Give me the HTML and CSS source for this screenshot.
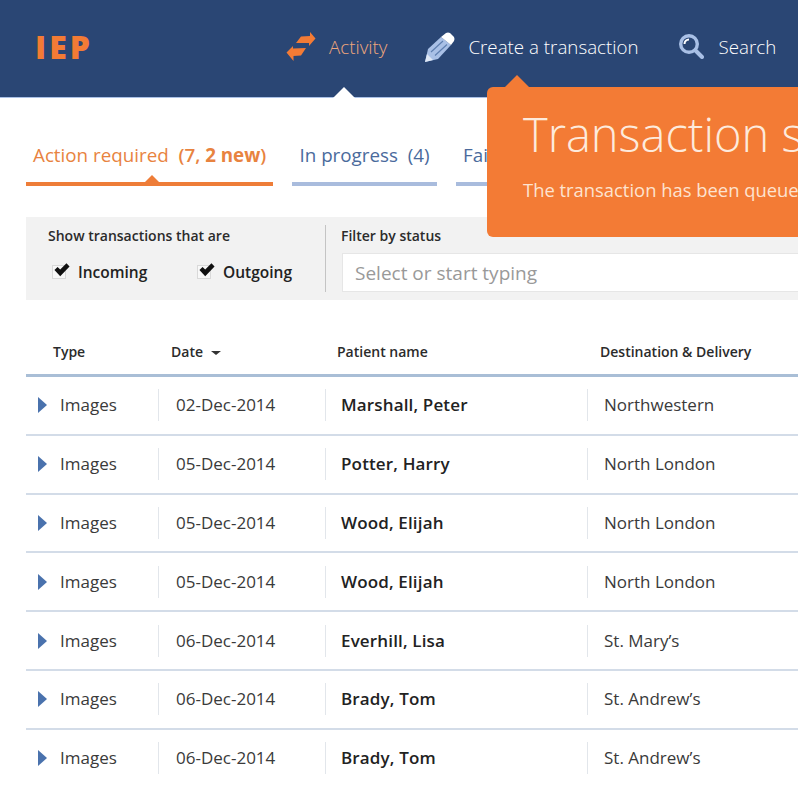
FILE: index.html
```html
<!DOCTYPE html>
<html lang="en">
<head>
    <meta charset="UTF-8">
    <meta name="viewport" content="width=device-width, initial-scale=1.0">
    <title>IEP Activity</title>
    <link rel="stylesheet" href="styles.css">
</head>
<body>
    <!-- Header -->
    <header class="topbar">
        <div class="logo">IEP</div>
        <nav class="main-nav">
            <a class="nav-item nav-activity">
                <svg class="nav-icon icon-activity" viewBox="0 0 30 30"><path d="M15 4.500 L24 4 L24 0 L29.500 6.500 L23 14 L23 11 L10 11 Z" fill="#f37b35"/><path d="M0.500 20.500 L7 14 L7 16.500 L20 16 L15 23.500 L7.500 24 L7.500 29 Z" fill="#f37b35"/></svg>
                <span>Activity</span>
            </a>
            <a class="nav-item nav-create">
                <svg class="nav-icon icon-create" viewBox="0 0 30 30"><path d="M0 30 L3 17 L16 5 L26 13 L13 27 Z" fill="#a9c0e6"/><path d="M16 5 L21 1 Q23 0 25 1 L29 5 Q30 7 29 9 L26 13 Z" fill="#fff"/><path d="M0 30 L2 22 L8 28 Z" fill="#dfe8f6"/><path d="M6 20 L18 9 M10 23.500 L22 12.500" stroke="#5f7fb0" stroke-width="1.200"/></svg>
                <span>Create a transaction</span>
            </a>
            <a class="nav-item nav-search">
                <svg class="nav-icon icon-search" viewBox="0 0 25 25"><circle cx="10" cy="10" r="8.300" fill="#2a4674" stroke="#a9c0e6" stroke-width="3.400"/><path d="M5.500 10 A4.500 4.500 0 0 1 10 5.500" fill="none" stroke="#fff" stroke-width="2"/><path d="M16.500 16.500 L23 23" stroke="#a9c0e6" stroke-width="4" stroke-linecap="round"/></svg>
                <span>Search</span>
            </a>
        </nav>
        <span class="activity-notch"></span>
    </header>

    <!-- Tabs -->
    <div class="tabs">
        <div class="tab tab-action">Action required&nbsp; <span class="tab-count">(7, <b>2 new</b>)</span></div>
        <div class="tab tab-progress">In progress&nbsp; (4)</div>
        <div class="tab tab-failed">Failed&nbsp; (1)</div>
    </div>

    <!-- Filters -->
    <div class="filter-bar">
        <div class="filter-direction">
            <div class="filter-label">Show transactions that are</div>
            <div class="checks">
                <label class="check check-in"><span class="box"><svg viewBox="0 0 18 15"><path d="M0.500 7.500 L4 4 L7 7 L14 0 L17.500 3.500 L7 14.500 Z" fill="#111"/></svg></span>Incoming</label>
                <label class="check"><span class="box"><svg viewBox="0 0 18 15"><path d="M0.500 7.500 L4 4 L7 7 L14 0 L17.500 3.500 L7 14.500 Z" fill="#111"/></svg></span>Outgoing</label>
            </div>
        </div>
        <div class="filter-status">
            <div class="filter-label">Filter by status</div>
            <div class="status-input">Select or start typing</div>
        </div>
    </div>

    <!-- Transactions -->
    <div class="table">
        <div class="table-head">
            <div class="th th-type">Type</div>
            <div class="th th-date">Date <span class="sort-caret"></span></div>
            <div class="th th-name">Patient name</div>
            <div class="th th-dest">Destination &amp; Delivery</div>
        </div>
        <div class="row">
            <div class="cell cell-type"><span class="expander"></span>Images</div>
            <div class="cell cell-date">02-Dec-2014</div>
            <div class="cell cell-name">Marshall, Peter</div>
            <div class="cell cell-dest">Northwestern</div>
        </div>
        <div class="row">
            <div class="cell cell-type"><span class="expander"></span>Images</div>
            <div class="cell cell-date">05-Dec-2014</div>
            <div class="cell cell-name">Potter, Harry</div>
            <div class="cell cell-dest">North London</div>
        </div>
        <div class="row">
            <div class="cell cell-type"><span class="expander"></span>Images</div>
            <div class="cell cell-date">05-Dec-2014</div>
            <div class="cell cell-name">Wood, Elijah</div>
            <div class="cell cell-dest">North London</div>
        </div>
        <div class="row">
            <div class="cell cell-type"><span class="expander"></span>Images</div>
            <div class="cell cell-date">05-Dec-2014</div>
            <div class="cell cell-name">Wood, Elijah</div>
            <div class="cell cell-dest">North London</div>
        </div>
        <div class="row">
            <div class="cell cell-type"><span class="expander"></span>Images</div>
            <div class="cell cell-date">06-Dec-2014</div>
            <div class="cell cell-name">Everhill, Lisa</div>
            <div class="cell cell-dest">St. Mary’s</div>
        </div>
        <div class="row">
            <div class="cell cell-type"><span class="expander"></span>Images</div>
            <div class="cell cell-date">06-Dec-2014</div>
            <div class="cell cell-name">Brady, Tom</div>
            <div class="cell cell-dest">St. Andrew’s</div>
        </div>
        <div class="row">
            <div class="cell cell-type"><span class="expander"></span>Images</div>
            <div class="cell cell-date">06-Dec-2014</div>
            <div class="cell cell-name">Brady, Tom</div>
            <div class="cell cell-dest">St. Andrew’s</div>
        </div>
    </div>

    <!-- Toast -->
    <div class="toast">
        <h1>Transaction submitted</h1>
        <p>The transaction has been queued for delivery.</p>
    </div>
</body>
</html>
```

FILE: styles.css
```css
html, body {
    height: 100%;
    overflow: hidden;
}
body {
    margin: 0;
    position: relative;
    width: 798px;
    background-color: #fff;
    font-family: "Open Sans", Arial, sans-serif;
    color: #222;
}

/* Header */
.topbar {
    height: 98px;
    box-sizing: border-box;
    padding-left: 35px;
    background-color: #2a4674;
    border-bottom: 1px solid #a9c0e6;
    display: flex;
    align-items: center;
    position: relative;
}
.logo {
    color: #f37b35;
    font-size: 32px;
    font-weight: 800;
    letter-spacing: 3px;
    width: 251px;
    flex-shrink: 0;
    position: relative;
    top: -2px;
}
.main-nav {
    display: flex;
    align-items: center;
    white-space: nowrap;
    font-size: 18.750px;
    font-weight: 300;
    position: relative;
    top: -2px;
}
.nav-item {
    display: flex;
    align-items: center;
    color: #fff;
}
.nav-activity {
    color: #f0a77c;
    gap: 13px;
    margin-right: 38px;
}
.nav-create {
    gap: 13px;
    margin-right: 40px;
}
.nav-search {
    gap: 15px;
}
.nav-icon {
    flex-shrink: 0;
}
.icon-activity,
.icon-create {
    width: 30px;
    height: 30px;
}
.icon-search {
    width: 25px;
    height: 25px;
}
.activity-notch {
    position: absolute;
    left: 333px;
    bottom: -1px;
    border-left: 11px solid transparent;
    border-right: 11px solid transparent;
    border-bottom: 11px solid #fff;
}

/* Tabs */
.tabs {
    display: flex;
    gap: 19px;
    margin: 41px 0 0 26px;
}
.tab {
    height: 47px;
    box-sizing: border-box;
    padding: 1px 7px 0;
    border-bottom: 4px solid #a9bcdd;
    color: #4a6a9c;
    font-size: 18.800px;
    line-height: 30px;
    white-space: nowrap;
    text-align: center;
}
.tab-action {
    width: 247px;
    color: #e8833f;
    border-bottom-color: #ee7d38;
    position: relative;
}
.tab-count {
    font-weight: 600;
}
.tab-count b {
    font-weight: 700;
}
.tab-action::after {
    content: "";
    position: absolute;
    left: 119px;
    bottom: 0;
    border-left: 7px solid transparent;
    border-right: 7px solid transparent;
    border-bottom: 7px solid #ee7d38;
}
.tab-progress {
    width: 145px;
}
.tab-failed {
    width: 140px;
    text-align: left;
}

/* Filters */
.filter-bar {
    margin: 31px 0 0 26px;
    height: 83px;
    box-sizing: border-box;
    padding: 8px 0 8px 22px;
    background-color: #f2f2f2;
    display: flex;
}
.filter-direction {
    width: 278px;
    flex-shrink: 0;
    box-sizing: border-box;
    border-right: 1px solid #c4c4c4;
}
.filter-label {
    margin-top: 1px;
    font-size: 14px;
    font-weight: 600;
    line-height: 20px;
    color: #2b2b2b;
}
.checks {
    display: flex;
    margin: 16px 0 0 4px;
}
.check {
    display: flex;
    align-items: center;
    font-size: 15.500px;
    font-weight: 600;
    line-height: 20px;
}
.check-in {
    width: 145px;
}
.box {
    width: 14px;
    height: 14px;
    margin-right: 12px;
    box-sizing: border-box;
    border: 1px solid #d9d9d9;
    background-color: #f8f8f8;
    position: relative;
}
.box svg {
    position: absolute;
    left: 1px;
    top: -3px;
    width: 16px;
    height: 14px;
}
.filter-status {
    flex: 1;
    min-width: 0;
    margin-left: 15px;
}
.status-input {
    margin: 7px 0 0 1px;
    height: 39px;
    box-sizing: border-box;
    padding-left: 12px;
    background-color: #fff;
    border: 1px solid #e6e6e6;
    border-right: none;
    color: #999;
    font-size: 19px;
    line-height: 38px;
}

/* Table */
.table {
    margin: 31px 0 0 26px;
}
.table-head {
    height: 46px;
    box-sizing: border-box;
    border-bottom: 3px solid #a9bed6;
    display: grid;
    grid-template-columns: 145px 166px 263px 1fr;
    font-size: 14px;
    font-weight: 600;
    line-height: 42px;
    color: #2b2b2b;
}
.th-type {
    padding-left: 27px;
}
.sort-caret {
    display: inline-block;
    margin-left: 4px;
    vertical-align: 2px;
    border-left: 5px solid transparent;
    border-right: 5px solid transparent;
    border-top: 4px solid #333;
}
.row {
    height: 58.800px;
    box-sizing: border-box;
    border-bottom: 2px solid #d3dce8;
    display: grid;
    grid-template-columns: 132px 167px 262px 1fr;
    align-items: center;
    font-size: 17px;
    color: #3a3a3a;
}
.row:last-child {
    border-bottom-color: transparent;
}
.cell {
    height: 32px;
    line-height: 32px;
    padding-left: 17px;
    box-sizing: border-box;
    border-left: 1px solid #e2e6eb;
    white-space: nowrap;
}
.cell-type {
    border-left: none;
    padding-left: 12px;
    display: flex;
    align-items: center;
}
.cell-name {
    padding-left: 15px;
    font-weight: 600;
    letter-spacing: 0.150px;
    color: #222;
}
.cell-dest {
    padding-left: 16px;
}
.expander {
    margin-right: 13px;
    border-top: 8px solid transparent;
    border-bottom: 8px solid transparent;
    border-left: 9px solid #4a72ad;
}

/* Toast */
.toast {
    position: absolute;
    left: 487px;
    top: 87px;
    width: 500px;
    height: 150px;
    box-sizing: border-box;
    padding: 15px 36px;
    background-color: #f37b35;
    border-radius: 6px;
    color: #fff;
    white-space: nowrap;
}
.toast::before {
    content: "";
    position: absolute;
    left: 18px;
    top: -12px;
    border-left: 12px solid transparent;
    border-right: 12px solid transparent;
    border-bottom: 12px solid #f37b35;
}
.toast h1 {
    margin: 0;
    font-size: 47px;
    font-weight: 300;
    line-height: 64px;
    color: #fdeadc;
}
.toast p {
    margin: 12px 0 0;
    font-size: 18.400px;
    line-height: 24px;
    color: #fde3d0;
}
```
